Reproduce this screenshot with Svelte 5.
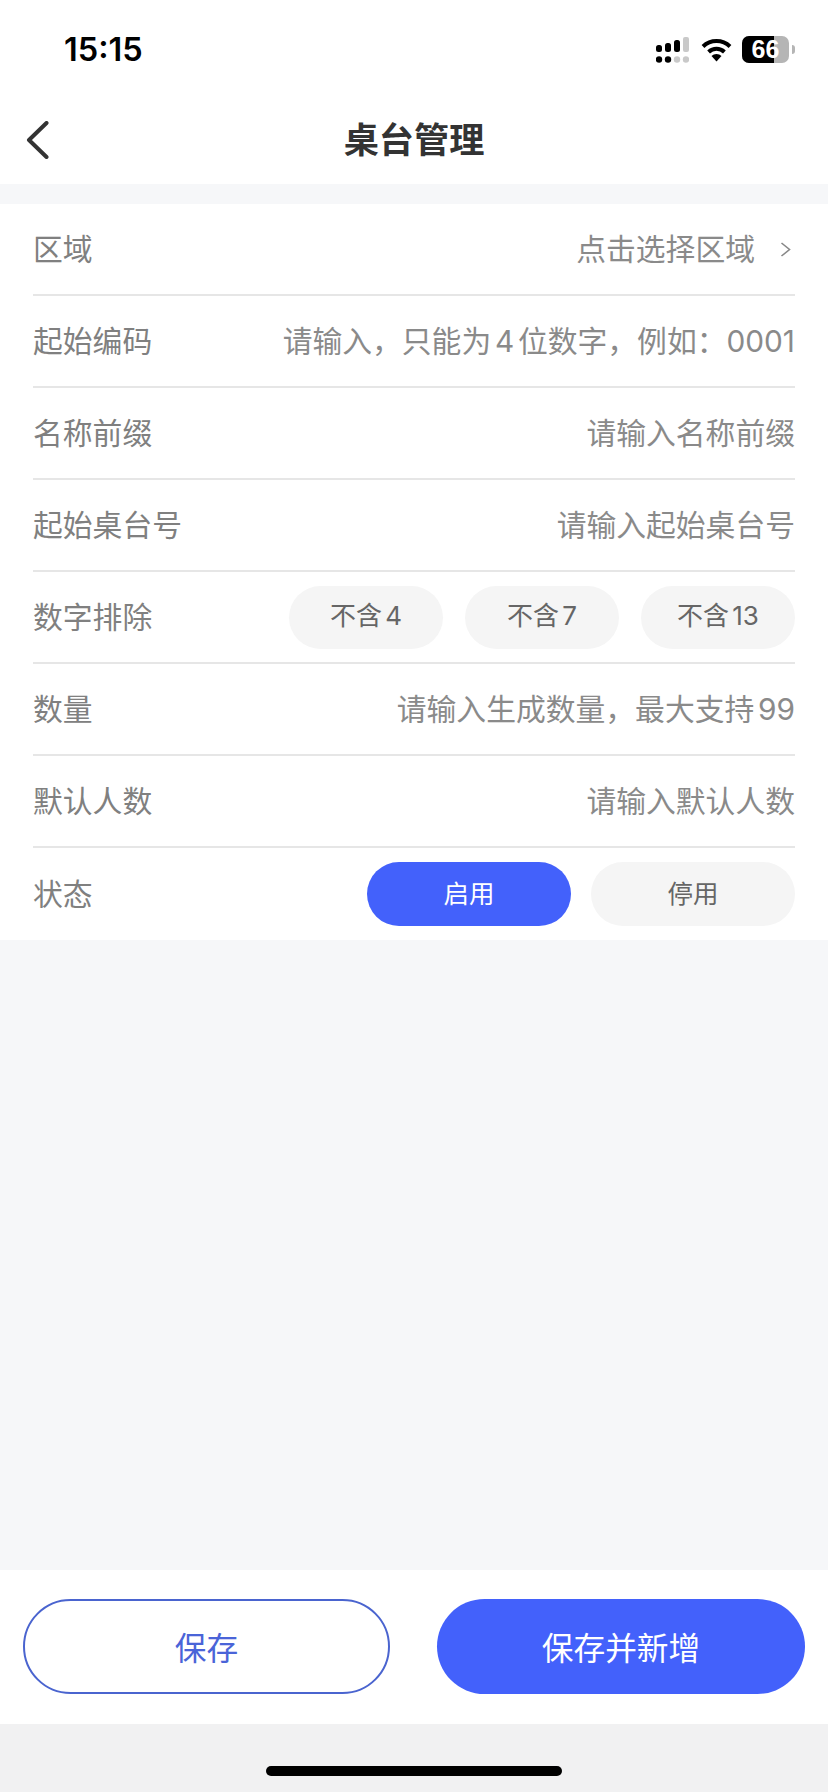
<script>
  const rows = [
    { label: '区域', value: '点击选择区域', arrow: true },
    { label: '起始编码', value: '请输入，只能为4位数字，例如：0001' },
    { label: '名称前缀', value: '请输入名称前缀' },
    { label: '起始桌台号', value: '请输入起始桌台号' },
    { label: '数字排除', chips: ['不含4', '不含7', '不含13'] },
    { label: '数量', value: '请输入生成数量，最大支持99' },
    { label: '默认人数', value: '请输入默认人数' },
    { label: '状态', status: true }
  ];
</script>

<div class="page" lang="zh-CN">
  <header class="top">
    <div class="status">
      <span class="time">15:15</span>
      <div class="sys">
        <svg class="signal" width="33" height="26" viewBox="0 0 33 26" aria-hidden="true">
          <rect x="0" y="8" width="6" height="7" rx="2.5" fill="#000" />
          <rect x="9" y="6" width="6" height="9" rx="2.5" fill="#000" />
          <rect x="18" y="3" width="6" height="12" rx="2.5" fill="#000" />
          <rect x="27" y="0" width="6" height="15" rx="2" fill="#c9c9c9" />
          <circle cx="3" cy="22.5" r="3.2" fill="#000" />
          <circle cx="12" cy="22.5" r="3.2" fill="#000" />
          <circle cx="21" cy="22.5" r="3.2" fill="#c9c9c9" />
          <circle cx="30" cy="22.5" r="3.2" fill="#c9c9c9" />
        </svg>
        <svg class="wifi" width="31" height="24" viewBox="0 0 31 24" aria-hidden="true">
          <path d="M2 8.5 A19.5 19.5 0 0 1 29 8.5" fill="none" stroke="#000" stroke-width="4" />
          <path d="M7.6 14 A11.5 11.5 0 0 1 23.4 14" fill="none" stroke="#000" stroke-width="4" />
          <path d="M15.5 23.5 L10.5 18 A7 7 0 0 1 20.5 18 Z" fill="#000" />
        </svg>
        <div class="battery">
          <div class="cell"><span class="fill"></span><b>66</b></div>
          <span class="nub"></span>
        </div>
      </div>
    </div>
    <nav class="nav">
      <svg class="back" width="24" height="38" viewBox="0 0 24 38" aria-hidden="true">
        <path d="M20.5 2 L3 19 L20.5 36" fill="none" stroke="#333" stroke-width="4" stroke-linecap="round" stroke-linejoin="round" />
      </svg>
      <h1>桌台管理</h1>
    </nav>
  </header>

  <section class="form">
    {#each rows as row}
      <div class="row">
        <span class="label">{row.label}</span>
        {#if row.chips}
          <div class="chips">
            {#each row.chips as chip}
              <span class="chip">{chip}</span>
            {/each}
          </div>
        {:else if row.status}
          <div class="states">
            <span class="state on">启用</span>
            <span class="state">停用</span>
          </div>
        {:else}
          <span class="value">
            {row.value}
            {#if row.arrow}
              <svg class="arrow" width="11" height="15" viewBox="0 0 11 15" aria-hidden="true">
                <path d="M1.5 1 L9.5 7.5 L1.5 14" fill="none" stroke="#888" stroke-width="1.6" />
              </svg>
            {/if}
          </span>
        {/if}
      </div>
    {/each}
  </section>

  <div class="grow"></div>

  <footer class="actions">
    <button class="btn outline">保存</button>
    <button class="btn solid">保存并新增</button>
  </footer>
  <div class="safe"><span class="home"></span></div>
</div>

<style>
  :global(body) {
    margin: 0;
    background: #f6f7f9;
  }
  .page {
    width: 828px;
    height: 1792px;
    display: flex;
    flex-direction: column;
    background: #f6f7f9;
    font-family: Inter, "Noto Sans CJK SC", sans-serif;
    text-autospace: normal;
  }
  .top {
    background: #fff;
    margin-bottom: 20px;
  }
  .status {
    height: 92px;
    display: flex;
    justify-content: space-between;
    align-items: flex-start;
    padding: 0 33px 0 64px;
    box-sizing: border-box;
  }
  .time {
    margin-top: 31px;
    font-size: 32.5px;
    line-height: 38px;
    font-weight: 600;
    color: #000;
  }
  .sys {
    display: flex;
    align-items: flex-start;
    margin-top: 36px;
  }
  .signal {
    margin-top: 1px;
  }
  .wifi {
    margin: 2px 10px 0 12px;
  }
  .battery {
    display: flex;
    align-items: center;
  }
  .cell {
    position: relative;
    width: 47px;
    height: 27px;
    border-radius: 7px;
    background: #b5b5b5;
    overflow: hidden;
    display: flex;
    align-items: center;
    justify-content: center;
  }
  .fill {
    position: absolute;
    left: 0;
    top: 0;
    bottom: 0;
    width: 32px;
    background: #000;
  }
  .cell b {
    position: relative;
    color: #fff;
    font-size: 25px;
    font-family: "Liberation Sans", sans-serif;
    font-weight: 700;
  }
  .nub {
    width: 3px;
    height: 9px;
    margin-left: 3px;
    border-radius: 0 3px 3px 0;
    background: #b5b5b5;
  }
  .nav {
    height: 92px;
    position: relative;
    display: flex;
    align-items: center;
    justify-content: center;
  }
  .back {
    position: absolute;
    left: 26px;
    top: 29px;
  }
  h1 {
    margin: 3px 0 0;
    font-size: 35.2px;
    line-height: 48px;
    font-weight: 700;
    color: #333;
  }
  .form {
    background: #fff;
    padding: 0 33px;
  }
  .row {
    height: 92px;
    box-sizing: border-box;
    display: flex;
    align-items: center;
    justify-content: space-between;
    border-bottom: 2px solid #e6e6e6;
    font-size: 29.8px;
    color: #858585;
  }
  .row:last-child {
    border-bottom: 0;
  }
  .label {
    color: #808080;
    margin-bottom: 4px;
  }
  .value {
    display: flex;
    align-items: center;
    color: #8a8a8a;
    margin-bottom: 4px;
  }
  .arrow {
    margin: 4px 4px 0 25px;
  }
  .chips {
    display: flex;
    gap: 22px;
  }
  .chip {
    width: 154px;
    height: 63px;
    box-sizing: border-box;
    padding-bottom: 7px;
    border-radius: 32px;
    background: #f5f5f5;
    color: #666;
    font-size: 26px;
    display: flex;
    align-items: center;
    justify-content: center;
  }
  .states {
    display: flex;
    gap: 20px;
  }
  .state {
    width: 204px;
    height: 64px;
    box-sizing: border-box;
    padding-bottom: 5px;
    border-radius: 32px;
    background: #f5f5f5;
    color: #666;
    font-size: 25.5px;
    display: flex;
    align-items: center;
    justify-content: center;
  }
  .state.on {
    background: #4361fb;
    color: #fff;
  }
  .grow {
    flex: 1;
  }
  .actions {
    height: 154px;
    box-sizing: border-box;
    background: #fff;
    display: flex;
    justify-content: space-between;
    padding: 29px 23px 30px 23px;
  }
  .btn {
    height: 95px;
    border-radius: 48px;
    font-family: inherit;
    font-size: 31.7px;
    padding: 0 0 2px;
    box-sizing: border-box;
  }
  .outline {
    width: 367px;
    background: #fff;
    border: 2px solid #4a64cf;
    color: #4a64d8;
  }
  .solid {
    width: 368px;
    background: #4361fb;
    border: 0;
    color: #fff;
  }
  .safe {
    height: 68px;
    background: #f1f1f2;
    display: flex;
    justify-content: center;
    padding-top: 42px;
    box-sizing: border-box;
  }
  .home {
    width: 296px;
    height: 10px;
    border-radius: 5px;
    background: #000;
  }
</style>
